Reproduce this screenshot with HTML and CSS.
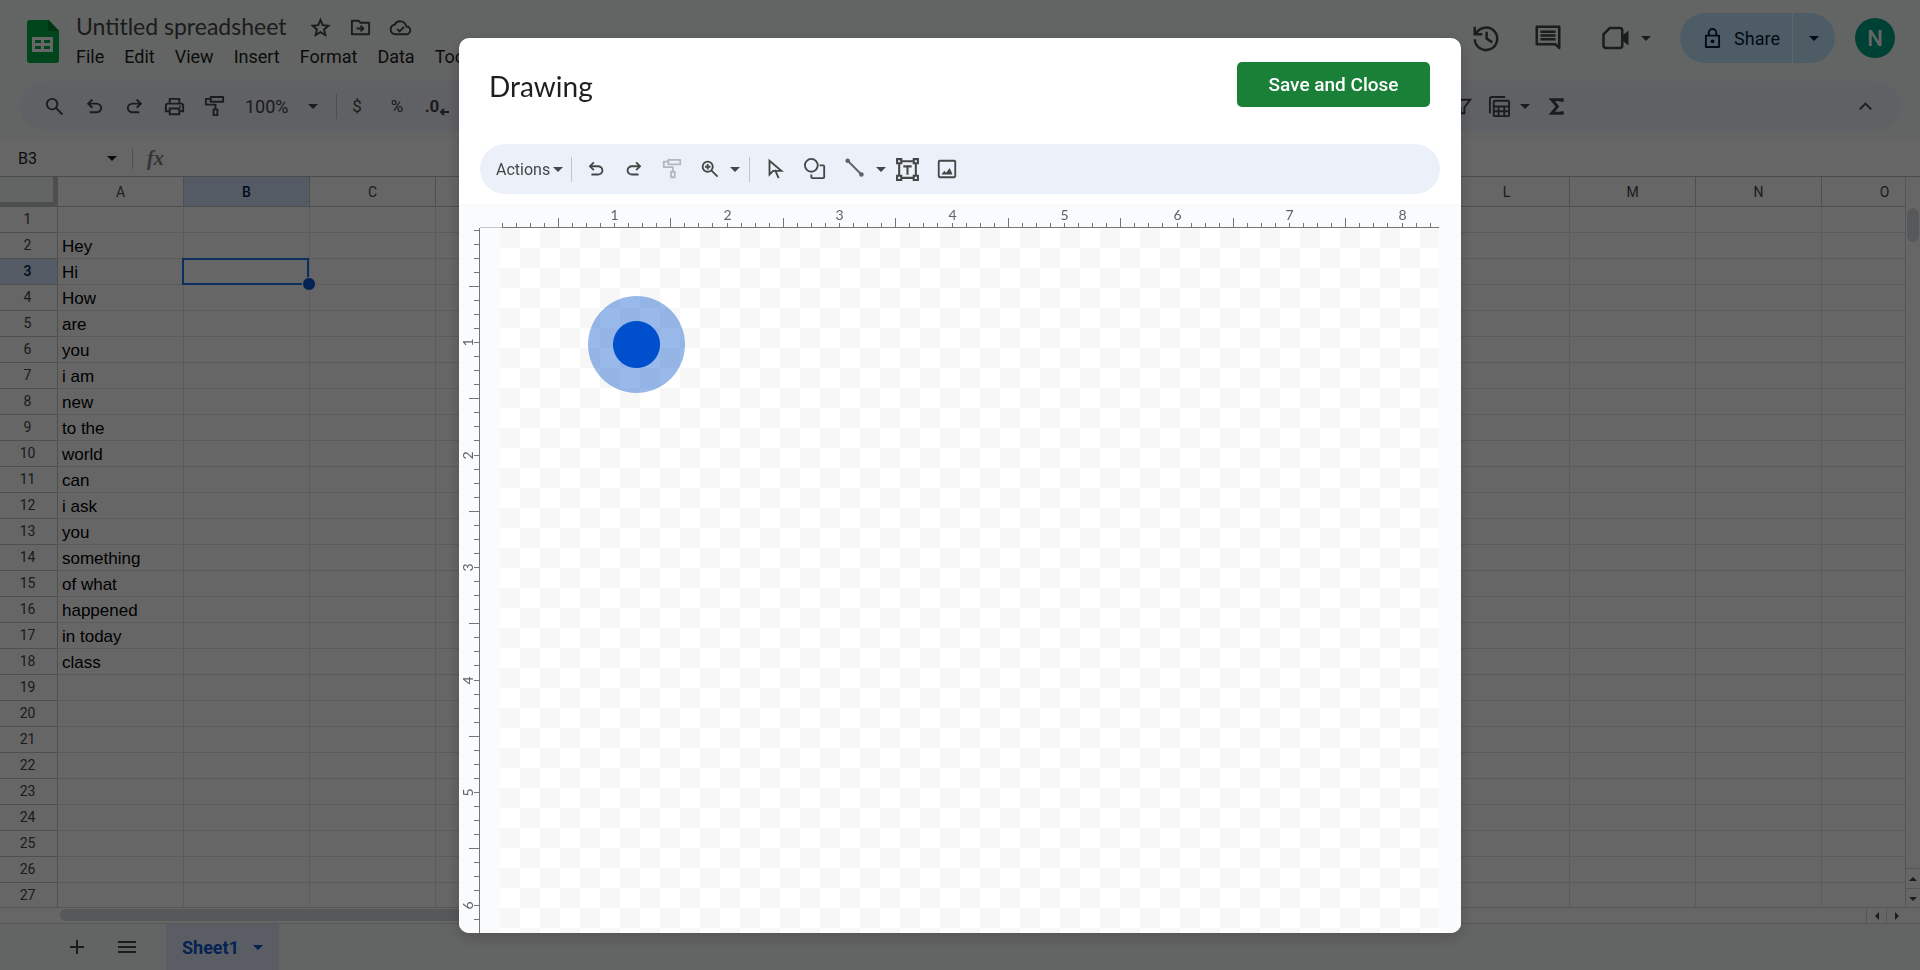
FILE: index.html
```
<!DOCTYPE html>
<html lang="en">

<head>
    <meta charset="UTF-8">
    <meta name="viewport" content="width=device-width, initial-scale=1.0">
    <title>Untitled spreadsheet</title>
    <link rel="stylesheet" href="styles.css">
</head>

<body>
    <svg class="sprite" aria-hidden="true">
        <symbol id="caret" viewBox="0 0 10 5"><path d="M0 0h10L5 5z" fill="currentColor" /></symbol>
        <symbol id="undo" viewBox="0 -960 960 960"><path fill="currentColor" d="M280-200v-80h284q63 0 109.500-40T720-420q0-60-46.500-100T564-560H312l104 104-56 56-200-200 200-200 56 56-104 104h252q97 0 166.500 63T800-420q0 94-69.500 157T564-200H280Z" /></symbol>
        <symbol id="redo" viewBox="0 -960 960 960"><path fill="currentColor" d="M396-200q-97 0-166.500-63T160-420q0-94 69.500-157T396-640h252L544-744l56-56 200 200-200 200-56-56 104-104H396q-63 0-109.500 40T240-420q0 60 46.500 100T396-280h284v80H396Z" /></symbol>
        <symbol id="search" viewBox="0 -960 960 960"><path fill="currentColor" d="M784-120 532-372q-30 24-69 38t-83 14q-109 0-184.500-75.500T120-580q0-109 75.500-184.500T380-840q109 0 184.500 75.500T640-580q0 44-14 83t-38 69l252 252-56 56ZM380-400q75 0 127.500-52.500T560-580q0-75-52.500-127.500T380-760q-75 0-127.500 52.500T200-580q0 75 52.500 127.500T380-400Z" /></symbol>
        <symbol id="roller" viewBox="0 0 24 24"><path d="M8 2h13v5H8zM8 4H3v6h10v5M11 15h4v6h-4z" fill="none" stroke="currentColor" stroke-width="2" stroke-linejoin="round" /></symbol>
    </svg>

    <div class="app">
        <header class="topbar">
            <svg class="logo" viewBox="0 0 32 43">
                <path d="M3 0h19l10 11v29a3 3 0 0 1-3 3H3a3 3 0 0 1-3-3V3a3 3 0 0 1 3-3z" fill="#00ac47" />
                <path d="M21 0l11 11H21z" fill="#00832d" />
                <path d="M5 17h21v15H5zM8 20v3h6v-3zM17 20v3h6v-3zM8 26v3h6v-3zM17 26v3h6v-3z" fill="#fff" fill-rule="evenodd" />
            </svg>
            <div class="doc">
                <div class="doc-title">
                    <h1>Untitled spreadsheet</h1>
                    <button aria-label="Star"><svg viewBox="0 0 24 24"><path d="M12 4l2.300 5.600 6 .5-4.600 3.900 1.400 5.900L12 16.800 6.900 19.900 8.300 14l-4.600-3.900 6-.5z" fill="none" stroke="currentColor" stroke-width="2" /></svg></button>
                    <button aria-label="Move"><svg viewBox="0 0 24 24"><path d="M3 5h7l2 2h9v12H3zM8 13h7M12 10l3 3-3 3" fill="none" stroke="currentColor" stroke-width="2" stroke-linejoin="round" /></svg></button>
                    <button aria-label="Cloud status"><svg viewBox="0 0 24 24"><path d="M6.500 19a5 5 0 0 1-.7-9.900A6.500 6.500 0 0 1 18 11a4 4 0 0 1 .5 8zM8.500 13.500l2.500 2.500 4.500-4.500" fill="none" stroke="currentColor" stroke-width="2" /></svg></button>
                </div>
                <nav class="menus">
                    <button>File</button>
                    <button>Edit</button>
                    <button>View</button>
                    <button>Insert</button>
                    <button>Format</button>
                    <button>Data</button>
                    <button>Tools</button>
                </nav>
            </div>
            <div class="actions">
                <button class="big-icon" aria-label="Version history"><svg viewBox="0 0 24 24"><path d="M4 8.500A9 9 0 1 1 3 13M3 3v6h6M12.500 7v5.500L17 15.500" fill="none" stroke="currentColor" stroke-width="2" /></svg></button>
                <button class="big-icon" aria-label="Comments"><svg viewBox="0 0 24 24"><path d="M3 3h18v17l-3-3H3z" fill="none" stroke="currentColor" stroke-width="2" stroke-linejoin="round" /><path d="M6 7h12M6 10h12M6 13h12" stroke="currentColor" stroke-width="2" /></svg></button>
                <button class="big-icon meet" aria-label="Meet"><svg viewBox="0 0 24 24"><path d="M7 4h8a2 2 0 0 1 2 2v12a2 2 0 0 1-2 2H4a2 2 0 0 1-2-2v-9z" fill="none" stroke="currentColor" stroke-width="2" /><path d="M17 10l5-4v12l-5-4z" fill="currentColor" /></svg><svg class="caret"><use href="#caret" /></svg></button>
                <div class="share">
                    <button class="share-main"><svg viewBox="0 0 18 22"><path d="M2 8h14v12H2zM5 8V5a4 4 0 0 1 8 0v3" fill="none" stroke="currentColor" stroke-width="2" stroke-linejoin="round" /><circle cx="9" cy="14" r="2" fill="currentColor" /></svg>Share</button>
                    <button class="share-more" aria-label="Share options"><svg class="caret"><use href="#caret" /></svg></button>
                </div>
                <button class="avatar" aria-label="Account">N</button>
            </div>
        </header>

        <div class="toolbar">
            <button aria-label="Search"><svg><use href="#search" /></svg></button>
            <button aria-label="Undo"><svg><use href="#undo" /></svg></button>
            <button aria-label="Redo"><svg><use href="#redo" /></svg></button>
            <button aria-label="Print"><svg viewBox="0 0 24 24"><path d="M7 8V4h10v4M7 17H3v-6a2 2 0 0 1 2-2h14a2 2 0 0 1 2 2v6h-4M7 14h10v6H7z" fill="none" stroke="currentColor" stroke-width="2" /><circle cx="18" cy="12" r="1" fill="currentColor" /></svg></button>
            <button aria-label="Paint format"><svg><use href="#roller" /></svg></button>
            <label class="zoom"><select aria-label="Zoom"><option>100%</option></select><svg class="caret"><use href="#caret" /></svg></label>
            <span class="sep"></span>
            <button>$</button>
            <button>%</button>
            <button class="decimals" aria-label="Decrease decimal places"><b>.0</b><svg viewBox="0 0 10 8"><path d="M10 4H2M5 1L2 4l3 3" fill="none" stroke="currentColor" stroke-width="2" /></svg></button>
            <div class="tool-space"></div>
            <button aria-label="Filter"><svg viewBox="0 0 24 24"><path d="M4 5h16l-6 8v6h-4v-6z" fill="none" stroke="currentColor" stroke-width="2" /></svg></button>
            <button class="views" aria-label="Filter views"><svg viewBox="0 0 24 24"><path d="M2 19V4a2 2 0 0 1 2-2h14M7 6h14a1 1 0 0 1 1 1v14a1 1 0 0 1-1 1H7a1 1 0 0 1-1-1V7a1 1 0 0 1 1-1zM6 12h16M6 17h16M11 12v10M17 12v10" fill="none" stroke="currentColor" stroke-width="2" /></svg><svg class="caret"><use href="#caret" /></svg></button>
            <button aria-label="Functions"><svg viewBox="0 0 24 24"><path d="M18 7V5H7l6 7-6 7h11v-2" fill="none" stroke="currentColor" stroke-width="3" /></svg></button>
            <button class="collapse" aria-label="Hide the menus"><svg viewBox="0 0 24 24"><path d="M6 15l6-6 6 6" fill="none" stroke="currentColor" stroke-width="2" /></svg></button>
        </div>

        <div class="formula">
            <input class="name-box" aria-label="Name box" value="B3">
            <svg class="caret"><use href="#caret" /></svg>
            <span class="sep"></span>
            <i class="fx">fx</i>
            <input class="formula-input" aria-label="Formula">
        </div>

        <div class="sheet">
            <div class="grid">
                <table>
                    <thead>
                        <tr id="cols">
                            <th class="corner"></th>
                        </tr>
                    </thead>
                    <tbody id="rows"></tbody>
                </table>
            </div>
            <div class="vscroll">
                <div class="vthumb"></div>
                <button aria-label="Scroll up"><svg class="up"><use href="#caret" /></svg></button>
                <button aria-label="Scroll down"><svg><use href="#caret" /></svg></button>
            </div>
        </div>
        <div class="hscroll">
            <div class="hthumb"></div>
            <button aria-label="Scroll left"><svg class="left"><use href="#caret" /></svg></button>
            <button aria-label="Scroll right"><svg class="right"><use href="#caret" /></svg></button>
        </div>

        <footer class="tabs">
            <button aria-label="Add sheet"><svg viewBox="0 0 24 24"><path d="M12 5v14M5 12h14" stroke="currentColor" stroke-width="2" /></svg></button>
            <button aria-label="All sheets"><svg viewBox="0 0 24 24"><path d="M3 7h18M3 12h18M3 17h18" stroke="currentColor" stroke-width="2" /></svg></button>
            <button class="tab">Sheet1<svg class="caret"><use href="#caret" /></svg></button>
        </footer>
    </div>

    <div class="overlay">
        <div class="dialog" role="dialog" aria-labelledby="dialogTitle">
            <div class="dialog-head">
                <h2 id="dialogTitle">Drawing</h2>
                <button class="save">Save and Close</button>
            </div>
            <div class="draw-bar">
                <button class="draw-actions">Actions<svg class="caret"><use href="#caret" /></svg></button>
                <span class="sep"></span>
                <div class="edit-tools">
                    <button aria-label="Undo"><svg><use href="#undo" /></svg></button>
                    <button aria-label="Redo"><svg><use href="#redo" /></svg></button>
                    <button aria-label="Paint format" disabled><svg><use href="#roller" /></svg></button>
                    <button aria-label="Zoom"><svg viewBox="0 -960 960 960"><use href="#search" x="0" y="-960" width="960" height="960" /><path fill="currentColor" d="M340-460v-80h-80v-80h80v-80h80v80h80v80h-80v80z" /></svg></button>
                    <button class="more" aria-label="Zoom options"><svg class="caret"><use href="#caret" /></svg></button>
                </div>
                <span class="sep"></span>
                <div class="shape-tools">
                    <button aria-label="Select"><svg viewBox="0 0 24 24"><path d="M6 3v15l4-4h9zM12 13l4 9" fill="none" stroke="currentColor" stroke-width="2" /></svg></button>
                    <button aria-label="Shape"><svg viewBox="0 0 24 24"><circle cx="8" cy="8" r="7" fill="none" stroke="currentColor" stroke-width="2" /><path d="M17 8h4a1 1 0 0 1 1 1v12a1 1 0 0 1-1 1H9a1 1 0 0 1-1-1v-3" fill="none" stroke="currentColor" stroke-width="2" /></svg></button>
                    <button class="line-tool" aria-label="Line"><svg viewBox="0 0 24 24"><path d="M4 3l15 15" stroke="currentColor" stroke-width="2" /><circle cx="4" cy="3" r="2.500" fill="currentColor" /><circle cx="19" cy="18" r="2.500" fill="currentColor" /></svg></button>
                    <button class="more" aria-label="Line options"><svg class="caret"><use href="#caret" /></svg></button>
                    <button class="text-box" aria-label="Text box"><svg viewBox="0 0 24 24"><path d="M2 2h4v4H2zM18 2h4v4h-4zM2 18h4v4H2zM18 18h4v4h-4zM6 4h12M6 20h12M4 6v12M20 6v12M8 9h8M12 9v8" fill="none" stroke="currentColor" stroke-width="2" /></svg></button>
                    <button aria-label="Image"><svg viewBox="0 0 24 24"><rect x="3" y="3" width="18" height="18" rx="1" fill="none" stroke="currentColor" stroke-width="2" /><path d="M6 18l3-4 2 2 4-5 3 7z" fill="currentColor" /></svg></button>
                </div>
            </div>
            <div class="workspace">
                <svg class="ruler-x" id="rulerX"></svg>
                <svg class="ruler-y" id="rulerY"></svg>
                <div class="canvas">
                    <div class="pointer"></div>
                </div>
            </div>
        </div>
    </div>

    <script src="script.js"></script>
</body>

</html>
```
FILE: styles.css
```
* {
    box-sizing: border-box;
    margin: 0;
    padding: 0;
}

body {
    height: 100vh;
    overflow: hidden;
    font-family: Roboto, sans-serif;
    color: #444746;
    background-color: #f8fcf9;
}

button,
input,
select {
    font: inherit;
    color: inherit;
    background: none;
    border: none;
    outline: none;
}

button {
    display: flex;
    align-items: center;
    justify-content: center;
    flex-shrink: 0;
}

svg {
    display: block;
    flex-shrink: 0;
}

.sprite {
    position: absolute;
    width: 0;
    height: 0;
}

.caret,
button .caret {
    width: 10px;
    height: 5px;
}

.sep {
    width: 1px;
    height: 25px;
    flex-shrink: 0;
    background-color: #c0c4c8;
}

.app {
    height: 100vh;
    display: flex;
    flex-direction: column;
}

/* top bar */

.topbar {
    height: 81px;
    display: flex;
    flex-shrink: 0;
    padding-left: 27px;
}

.logo {
    width: 32px;
    height: 43px;
    margin-top: 20px;
}

.doc {
    padding: 10px 0 0 17px;
}

.doc-title {
    display: flex;
    align-items: center;
    height: 34px;
}

.doc-title h1 {
    font-family: Lato, sans-serif;
    font-size: 23px;
    line-height: 28px;
    font-weight: 400;
    margin-right: 14px;
    padding-bottom: 2px;
}

.doc-title button {
    width: 40px;
}

.doc-title svg {
    width: 23px;
    height: 23px;
}

.menus {
    display: flex;
    gap: 20px;
    font-size: 18px;
    line-height: 26px;
    color: #1f1f1f;
}

.actions {
    display: flex;
    align-items: center;
    height: 76px;
    margin-left: auto;
    padding-right: 25px;
}

.big-icon {
    width: 62px;
}

.big-icon svg {
    width: 30px;
    height: 30px;
}

.big-icon .caret {
    width: 10px;
    height: 5px;
}

.meet {
    width: 88px;
    padding-left: 6px;
    gap: 10px;
}

.share {
    display: flex;
    height: 50px;
    margin: 0 20px 0 13px;
    border-radius: 25px;
    overflow: hidden;
    background-color: #c2e7ff;
    color: #001d35;
    font-size: 18px;
}

.share-main {
    width: 113px;
    gap: 13px;
    padding-left: 12px;
    border-right: 1px solid #f8fcf9;
}

.share-main svg {
    width: 17px;
    height: 21px;
}

.share-more {
    width: 42px;
}

.avatar {
    width: 40px;
    height: 40px;
    border-radius: 50%;
    background-color: #00a385;
    color: #fff;
    font-size: 22px;
    font-weight: 500;
}

/* toolbar */

.toolbar {
    display: flex;
    align-items: center;
    flex-shrink: 0;
    height: 50px;
    margin: 0 19px 9px 20px;
    padding: 0 16px 0 14px;
    border-radius: 25px;
    background-color: #edf2fa;
    font-size: 17px;
}

.toolbar button {
    width: 40px;
}

.toolbar svg {
    width: 23px;
    height: 23px;
}

.toolbar .caret {
    width: 10px;
    height: 5px;
}

.zoom {
    display: flex;
    align-items: center;
    gap: 13px;
    width: 102px;
    padding-left: 11px;
    font-size: 18px;
}

.zoom select {
    appearance: none;
    width: 50px;
}

.toolbar .decimals svg {
    width: 10px;
    height: 8px;
    margin-top: 12px;
}

.tool-space {
    flex: 0 0 985px;
}

.toolbar .views {
    width: 54px;
    gap: 9px;
}

.toolbar .collapse {
    margin-left: auto;
}

/* formula bar */

.formula {
    display: flex;
    align-items: center;
    flex-shrink: 0;
    height: 37px;
    padding-left: 18px;
    background-color: #fff;
    border-bottom: 1px solid #b8bcbc;
    color: #1f1f1f;
    font-size: 16px;
}

.name-box {
    width: 89px;
}

.formula .sep {
    height: 21px;
    margin: 0 14px 0 15px;
}

.fx {
    font-family: "Liberation Serif", serif;
    font-size: 20px;
    font-weight: 700;
    color: #80868b;
}

.formula-input {
    flex: 1;
    padding-left: 10px;
}

/* grid */

.sheet {
    flex: 1;
    min-height: 0;
    display: flex;
    background-color: #fff;
}

.grid {
    flex: 1;
    min-width: 0;
    overflow: hidden;
}

table {
    width: max-content;
    table-layout: fixed;
    border-collapse: separate;
    border-spacing: 0;
}

th,
td {
    width: 126px;
    min-width: 126px;
    height: 26px;
    border-right: 1px solid #e1e3e1;
    border-bottom: 1px solid #e1e3e1;
}

th {
    font-size: 14px;
    line-height: 16px;
    font-weight: 400;
    border-color: #c4c7c5;
}

thead th {
    height: 30px;
}

tbody th,
.corner {
    width: 58px;
    min-width: 58px;
}

tbody th {
    padding-right: 2px;
    padding-bottom: 2px;
}

.corner {
    border-right: 5px solid #c0c3c2;
    border-bottom: 5px solid #c0c3c2;
    background-color: #f8fcf9;
}

td {
    padding-left: 4px;
    vertical-align: bottom;
    font-family: "Liberation Sans", sans-serif;
    font-size: 17px;
    line-height: 22px;
    color: #000;
}

.active-head {
    background-color: #d3e3fd;
    color: #041e49;
    font-weight: 500;
}

.selected {
    position: relative;
}

.selected::before {
    content: "";
    position: absolute;
    inset: -1px 0 -1px -2px;
    border: 2px solid #1a73e8;
}

.selected::after {
    content: "";
    position: absolute;
    right: -7px;
    bottom: -7px;
    width: 12px;
    height: 12px;
    border: 1px solid #fff;
    border-radius: 50%;
    background-color: #0b57d0;
}

/* scrollbars */

.vscroll {
    width: 15px;
    padding: 30px 0 0;
    display: flex;
    flex-direction: column;
    border-left: 1px solid #d5d8d6;
}

.vthumb {
    width: 12px;
    height: 34px;
    margin: 1px 1px auto;
    border-radius: 6px;
    background-color: #dadce0;
}

.vscroll button {
    height: 20px;
    border-top: 1px solid #d5d8d6;
}

.vscroll svg,
.hscroll svg {
    width: 8px;
    height: 4px;
}

.up {
    transform: rotate(180deg);
}

.left {
    transform: rotate(90deg);
}

.right {
    transform: rotate(-90deg);
}

.hscroll {
    display: flex;
    flex-shrink: 0;
    height: 17px;
    margin-top: -1px;
    padding: 0 14px 0 60px;
    background-color: #fff;
    border-top: 1px solid #d5d8d6;
    border-bottom: 1px solid #d5d8d6;
}

.hthumb {
    width: 1100px;
    height: 12px;
    margin: 1px auto 0 0;
    border-radius: 6px;
    background-color: #dadce0;
}

.hscroll button {
    width: 20px;
    border-left: 1px solid #d5d8d6;
}

/* sheet tabs */

.tabs {
    display: flex;
    flex-shrink: 0;
    height: 46px;
    padding-left: 52px;
}

.tabs button {
    width: 50px;
}

.tabs svg {
    width: 24px;
    height: 24px;
}

.tabs .tab {
    width: 113px;
    height: 46px;
    margin-left: 14px;
    gap: 14px;
    background-color: #e1e9f7;
    color: #0b57d0;
    font-size: 18px;
    font-weight: 700;
}

.tabs .caret {
    width: 10px;
    height: 5px;
}

/* drawing dialog */

.overlay {
    position: fixed;
    inset: 0;
    display: flex;
    align-items: flex-start;
    justify-content: center;
    padding-top: 38px;
    background-color: rgba(0, 0, 0, 0.6);
}

.dialog {
    width: 1002px;
    max-width: 95vw;
    height: calc(100vh - 75px);
    display: flex;
    flex-direction: column;
    border-radius: 10px;
    overflow: hidden;
    background-color: #fff;
    box-shadow: 0 4px 16px rgba(0, 0, 0, 0.2);
}

.dialog-head {
    display: flex;
    align-items: flex-start;
    justify-content: space-between;
    height: 106px;
    flex-shrink: 0;
    padding: 24px 31px 0 30px;
}

.dialog-head h2 {
    font-family: Lato, sans-serif;
    font-size: 28px;
    line-height: 48px;
    font-weight: 400;
    color: #1f1f1f;
}

.save {
    width: 193px;
    height: 45px;
    border-radius: 5px;
    background-color: #1a8038;
    color: #fff;
    font-size: 19px;
    font-weight: 500;
}

.draw-bar {
    display: flex;
    align-items: center;
    flex-shrink: 0;
    height: 50px;
    margin: 0 21px 10px;
    padding-left: 16px;
    border-radius: 25px;
    background-color: #ebf0f9;
}

.draw-bar svg {
    width: 22px;
    height: 22px;
}

.draw-bar .caret {
    width: 10px;
    height: 5px;
}

.draw-bar .sep {
    margin: 0 5px 0 8px;
}

.draw-actions {
    gap: 3px;
    font-size: 16px;
}

.edit-tools,
.shape-tools {
    display: flex;
}

.edit-tools button {
    width: 38px;
    height: 40px;
}

.shape-tools button {
    width: 40px;
    height: 40px;
}

.draw-bar .more {
    width: 12px;
}

.line-tool {
    color: #5f6368;
}

.text-box svg {
    width: 25px;
    height: 25px;
}

.draw-bar button:disabled {
    color: #b4b8be;
}

.workspace {
    flex: 1;
    min-height: 0;
    display: grid;
    grid-template: 24px 1fr / 21px 1fr;
    padding-right: 22px;
    background-color: #f9fbfd;
}

.ruler-x {
    grid-column: 2;
    width: 100%;
    height: 24px;
}

.ruler-y {
    grid-column: 1;
    grid-row: 2;
    width: 21px;
    height: 100%;
}

.ruler-x text,
.ruler-y text {
    font-family: Lato, sans-serif;
    font-size: 14px;
    text-anchor: middle;
    fill: #5f6368;
}

.ruler-x line,
.ruler-y line {
    stroke: #757575;
    shape-rendering: crispEdges;
}

.ruler-x .ruler-start {
    stroke: #c4c7c5;
}

.canvas {
    position: relative;
    grid-column: 2;
    grid-row: 2;
    margin-left: 20px;
    background: repeating-conic-gradient(#fff 0 25%, #f7f7f7 0 50%) 0 0 / 40px 40px;
}

.pointer {
    position: absolute;
    left: 88px;
    top: 68px;
    width: 97px;
    height: 97px;
    border-radius: 50%;
    background: radial-gradient(circle, #0050cd 23px, rgba(0, 80, 205, 0.4) 24px);
}
```
FILE: script.js
```
const names = "ABCDEFGHIJKLMNO".split("");
const values = ["", "Hey", "Hi", "How", "are", "you", "i am", "new", "to the", "world", "can",
    "i ask", "you", "something", "of what", "happened", "in today", "class"];

const cols = document.getElementById("cols");
for (const name of names) {
    const th = document.createElement("th");
    th.textContent = name;
    if (name == "B") th.className = "active-head";
    cols.append(th);
}

const rows = document.getElementById("rows");
for (let r = 1; r <= 27; r++) {
    const tr = document.createElement("tr");
    const th = document.createElement("th");
    th.textContent = r;
    if (r == 3) th.className = "active-head";
    tr.append(th);
    names.forEach((name, c) => {
        const td = document.createElement("td");
        if (c == 0) td.textContent = values[r - 1] || "";
        if (r == 3 && name == "B") td.className = "selected";
        tr.append(td);
    });
    rows.append(tr);
}

// rulers: one inch is split into eight ticks
const inch = 225 / 2;

function add(svg, tag, attrs, text) {
    const el = document.createElementNS("http://www.w3.org/2000/svg", tag);
    for (const key in attrs) el.setAttribute(key, attrs[key]);
    if (text) el.textContent = text;
    svg.append(el);
}

function drawRulers() {
    const rx = document.getElementById("rulerX");
    const ry = document.getElementById("rulerY");
    const w = rx.clientWidth;
    const h = ry.clientHeight;
    rx.innerHTML = "";
    ry.innerHTML = "";
    add(rx, "line", { x1: 0, y1: 23.5, x2: 22, y2: 23.5, class: "ruler-start" });
    add(rx, "line", { x1: 22, y1: 23.5, x2: w, y2: 23.5 });
    add(ry, "line", { x1: 20.5, y1: 0, x2: 20.5, y2: h });
    for (let i = 0; 22 + i * inch / 8 < w; i++) {
        const x = Math.floor(22 + i * inch / 8) + 0.5;
        add(rx, "line", { x1: x, y1: i % 8 == 4 ? 14 : 19, x2: x, y2: 24 });
        if (i && i % 8 == 0) add(rx, "text", { x: x, y: 16 }, i / 8);
    }
    for (let i = 0; 2 + i * inch / 8 < h; i++) {
        const y = Math.floor(2 + i * inch / 8) + 0.5;
        add(ry, "line", { x1: i % 8 == 4 ? 10 : 15, y1: y, x2: 21, y2: y });
        if (i && i % 8 == 0) add(ry, "text", { transform: `translate(14 ${y}) rotate(-90)` }, i / 8);
    }
}
drawRulers();
window.addEventListener("resize", drawRulers);
```
